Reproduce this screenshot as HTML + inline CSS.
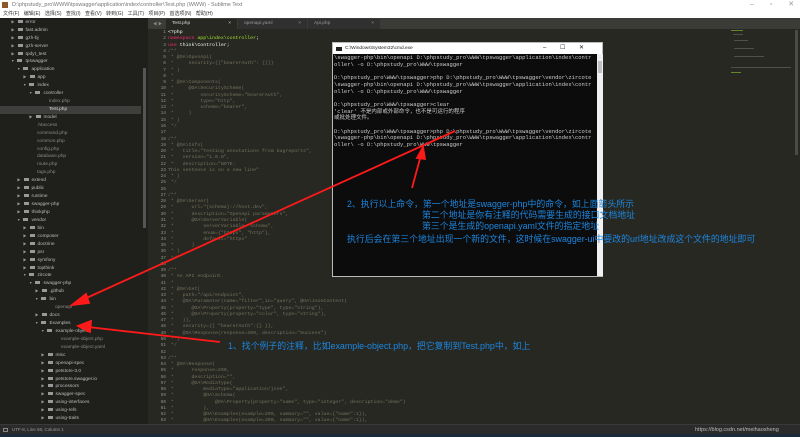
<!DOCTYPE html>
<html><head><meta charset="utf-8"><style>
*{margin:0;padding:0;box-sizing:border-box}
body{width:800px;height:437px;overflow:hidden;background:#272822;position:relative;font-family:"Liberation Sans","Noto Sans CJK SC",sans-serif}
.abs{position:absolute}
#title{left:0;top:0;width:800px;height:10px;background:#fff;font-size:5.5px;color:#777;line-height:10px;padding-left:12px}
#menu{left:0;top:10px;width:800px;height:8px;background:#fff;font-size:5px;color:#333;line-height:8px;padding-left:3px;word-spacing:3px}
#side{left:0;top:18px;width:148px;height:406px;background:#1f201c;font-size:4.8px;color:#bbb}
.row{position:absolute;height:7.9px;line-height:7.9px;white-space:nowrap}
.row i{display:inline-block;width:5px;height:3.5px;background:#999;margin-right:3px;vertical-align:middle}
.row b{font-weight:normal;color:#999;margin-right:3px;font-size:3.5px}
#tabs{left:148px;top:18px;width:652px;height:11px;background:#3b3b38}
.tab{position:absolute;top:1px;height:10px;font-size:4.8px;color:#999;line-height:10px;padding-left:6px;background:#303030}
#code{left:148px;top:30px;font-family:"Liberation Mono",monospace;font-size:4.9px;line-height:6.27px;color:#75715e;white-space:pre}
#ln{left:148px;top:30px;width:18px;text-align:right;font-family:"Liberation Mono",monospace;font-size:4.5px;line-height:6.27px;color:#8f908a;white-space:pre}
.k{color:#f92672}.g{color:#a6e22e}.w{color:#f8f8f2}
#cmd{left:332px;top:42px;width:271px;height:235px;background:#0c0c0c;border:1px solid #bbb}
#cmdt{left:0;top:0;width:269px;height:11px;background:#fff;font-size:4.8px;line-height:11px;color:#222;padding-left:12px}
#cmdtx{left:1px;top:12px;font-family:"Liberation Mono","Noto Sans CJK SC",monospace;font-size:5.5px;line-height:6.7px;color:#ccc;white-space:pre}
.ann{color:#1c86e0;font-size:8.9px;white-space:nowrap;position:absolute;line-height:12px}
#status{left:0;top:424px;width:800px;height:10px;background:#2b2b2b;border-top:1px solid #3a3a3a;font-size:4.5px;color:#999;line-height:10px;padding-left:12px}
#bot{left:0;top:434px;width:800px;height:3px;background:#1b2a3a}
</style></head><body>
<div id="title" class="abs">D:\phpstudy_pro\WWW\tpswagger\application\index\controller\Test.php (WWW) - Sublime Text</div>
<div class="abs" style="left:2px;top:2px;width:6px;height:6px;background:#8a5a2a"></div>
<div class="abs" style="left:750px;top:0;font-size:7px;color:#999;line-height:10px;word-spacing:14px">–  ▫  ✕</div>
<div id="menu" class="abs">文件(F) 编辑(E) 选择(S) 查找(I) 查看(V) 转到(G) 工具(T) 项目(P) 首选项(N) 帮助(H)</div>
<div id="side" class="abs">
<div class="row" style="left:11px;top:1px"><b>▶</b><i></i>error</div>
<div class="row" style="left:11px;top:9px"><b>▶</b><i></i>fast.admin</div>
<div class="row" style="left:11px;top:17px"><b>▶</b><i></i>gzh-bj</div>
<div class="row" style="left:11px;top:25px"><b>▶</b><i></i>gzh-server</div>
<div class="row" style="left:11px;top:33px"><b>▶</b><i></i>tpdyt_test</div>
<div class="row" style="left:11px;top:40px"><b>▼</b><i></i>tpswagger</div>
<div class="row" style="left:17px;top:48px"><b>▼</b><i></i>application</div>
<div class="row" style="left:23px;top:56px"><b>▶</b><i></i>app</div>
<div class="row" style="left:23px;top:64px"><b>▼</b><i></i>index</div>
<div class="row" style="left:29px;top:72px"><b>▼</b><i></i>controller</div>
<div class="row" style="left:49px;top:80px;color:#888">index.php</div>
<div class="abs" style="left:0;top:88px;width:141px;height:8px;background:#3e3e3c"></div>
<div class="row" style="left:49px;top:88px;color:#ddd">Test.php</div>
<div class="row" style="left:29px;top:96px"><b>▶</b><i></i>model</div>
<div class="row" style="left:37px;top:104px;color:#888">.htaccess</div>
<div class="row" style="left:37px;top:112px;color:#888">command.php</div>
<div class="row" style="left:37px;top:120px;color:#888">common.php</div>
<div class="row" style="left:37px;top:128px;color:#888">config.php</div>
<div class="row" style="left:37px;top:135px;color:#888">database.php</div>
<div class="row" style="left:37px;top:143px;color:#888">route.php</div>
<div class="row" style="left:37px;top:151px;color:#888">tags.php</div>
<div class="row" style="left:17px;top:159px"><b>▶</b><i></i>extend</div>
<div class="row" style="left:17px;top:167px"><b>▶</b><i></i>public</div>
<div class="row" style="left:17px;top:175px"><b>▶</b><i></i>runtime</div>
<div class="row" style="left:17px;top:183px"><b>▶</b><i></i>swagger-php</div>
<div class="row" style="left:17px;top:191px"><b>▶</b><i></i>thinkphp</div>
<div class="row" style="left:17px;top:199px"><b>▼</b><i></i>vendor</div>
<div class="row" style="left:23px;top:207px"><b>▶</b><i></i>bin</div>
<div class="row" style="left:23px;top:215px"><b>▶</b><i></i>composer</div>
<div class="row" style="left:23px;top:223px"><b>▶</b><i></i>doctrine</div>
<div class="row" style="left:23px;top:231px"><b>▶</b><i></i>psr</div>
<div class="row" style="left:23px;top:239px"><b>▶</b><i></i>symfony</div>
<div class="row" style="left:23px;top:247px"><b>▶</b><i></i>topthink</div>
<div class="row" style="left:23px;top:254px"><b>▼</b><i></i>zircote</div>
<div class="row" style="left:29px;top:262px"><b>▼</b><i></i>swagger-php</div>
<div class="row" style="left:35px;top:270px"><b>▶</b><i></i>.github</div>
<div class="row" style="left:35px;top:278px"><b>▼</b><i></i>bin</div>
<div class="row" style="left:55px;top:286px;color:#888">openapi</div>
<div class="row" style="left:35px;top:294px"><b>▶</b><i></i>docs</div>
<div class="row" style="left:35px;top:302px"><b>▼</b><i></i>Examples</div>
<div class="row" style="left:41px;top:310px"><b>▼</b><i></i>example-object</div>
<div class="row" style="left:61px;top:318px;color:#888">example-object.php</div>
<div class="row" style="left:61px;top:326px;color:#888">example-object.yaml</div>
<div class="row" style="left:41px;top:334px"><b>▶</b><i></i>misc</div>
<div class="row" style="left:41px;top:342px"><b>▶</b><i></i>openapi-spec</div>
<div class="row" style="left:41px;top:350px"><b>▶</b><i></i>petstore-3.0</div>
<div class="row" style="left:41px;top:358px"><b>▶</b><i></i>petstore.swagger.io</div>
<div class="row" style="left:41px;top:365px"><b>▶</b><i></i>processors</div>
<div class="row" style="left:41px;top:373px"><b>▶</b><i></i>swagger-spec</div>
<div class="row" style="left:41px;top:381px"><b>▶</b><i></i>using-interfaces</div>
<div class="row" style="left:41px;top:389px"><b>▶</b><i></i>using-refs</div>
<div class="row" style="left:41px;top:397px"><b>▶</b><i></i>using-traits</div>
<div class="abs" style="left:143px;top:50px;width:3px;height:160px;background:#555"></div>
</div>
<div id="tabs" class="abs">
<div class="abs" style="left:5px;top:0;font-size:4px;color:#888;line-height:11px">◀ ▶</div>
<div class="tab" style="left:18px;width:71px;background:#272822;color:#ddd">Test.php<span style="position:absolute;right:6px">×</span></div>
<div class="tab" style="left:90px;width:69px">openapi.yaml<span style="position:absolute;right:6px">×</span></div>
<div class="tab" style="left:160px;width:72px">Api.php<span style="position:absolute;right:6px">×</span></div>
</div>
<div id="ln" class="abs">1
2
3
4
5
6
7
8
9
10
11
12
13
14
15
16
17
18
19
20
21
22
23
24
25
26
27
28
29
30
31
32
33
34
35
36
37
38
39
40
41
42
43
44
45
46
47
48
49
50
51
52
53
54
55
56
57
58
59
60
61
62
63</div>
<div id="code" class="abs" style="left:168px"><span class="w">&lt;?php</span>
<span class="k">namespace</span> <span class="g">app\index\controller</span><span class="w">;</span>
<span class="k">use</span> <span class="w">think\Controller;</span>
/**
 * @OA\OpenApi(
 *     security={{"bearerAuth": {}}}
 * )
 *
 * @OA\Components(
 *     @OA\SecurityScheme(
 *         securityScheme="bearerAuth",
 *         type="http",
 *         scheme="bearer",
 *     )
 * )
 */

/**
 * @OA\Info(
 *   title="Testing annotations from bugreports",
 *   version="1.0.0",
 *   description="NOTE:
This sentence is on a new line"
 * )
 */

/**
 * @OA\Server(
 *      url="{schema}://host.dev",
 *      description="OpenApi parameters",
 *      @OA\ServerVariable(
 *          serverVariable="schema",
 *          enum={"https", "http"},
 *          default="https"
 *      )
 * )
 */

/**
 * An API endpoint.
 *
 * @OA\Get(
 *   path="/api/endpoint",
 *   @OA\Parameter(name="filter",in="query", @OA\JsonContent(
 *      @OA\Property(property="type", type="string"),
 *      @OA\Property(property="color", type="string"),
 *   )),
 *   security={{ "bearerAuth":{} }},
 *   @OA\Response(response=200, description="Success")
 * )
 */

/**
 * @OA\Response(
 *      response=200,
 *      description="",
 *      @OA\MediaType(
 *          mediaType="application/json",
 *          @OA\Schema(
 *              @OA\Property(property="name", type="integer", description="demo")
 *          ),
 *          @OA\Examples(example=200, summary="", value={"name":1}),
 *          @OA\Examples(example=300, summary="", value={"name":1}),</div>
<div class="abs" style="left:731px;top:30px;width:60px;height:50px;opacity:.5">
<div class="abs" style="left:0;top:0;width:12px;height:1px;background:#a6e22e"></div>
<div class="abs" style="left:2px;top:4px;width:10px;height:1px;background:#777"></div>
<div class="abs" style="left:3px;top:10px;width:14px;height:1px;background:#777"></div>
<div class="abs" style="left:3px;top:18px;width:20px;height:1px;background:#777"></div>
<div class="abs" style="left:3px;top:26px;width:30px;height:1px;background:#777"></div>
<div class="abs" style="left:0;top:37px;width:60px;height:1px;background:#777"></div>
<div class="abs" style="left:0;top:42px;width:10px;height:1px;background:#a6e22e"></div>
</div>
<div class="abs" style="left:795px;top:30px;width:3px;height:125px;background:#4a4a48"></div>
<div id="cmd" class="abs">
<div id="cmdt" class="abs">C:\Windows\System32\cmd.exe<span style="position:absolute;left:3px;top:4px;width:6px;height:4px;background:#222"></span><span style="position:absolute;left:210px;font-size:6px;word-spacing:12px">–  ☐  ✕</span></div>
<div id="cmdtx" class="abs">\swagger-php\bin\openapi D:\phpstudy_pro\WWW\tpswagger\application\index\contr
oller\ -o D:\phpstudy_pro\WWW\tpswagger

D:\phpstudy_pro\WWW\tpswagger&gt;php D:\phpstudy_pro\WWW\tpswagger\vendor\zircote
\swagger-php\bin\openapi D:\phpstudy_pro\WWW\tpswagger\application\index\contr
oller\ -o D:\phpstudy_pro\WWW\tpswagger

D:\phpstudy_pro\WWW\tpswagger&gt;clear
'clear' 不是内部或外部命令，也不是可运行的程序
或批处理文件。

D:\phpstudy_pro\WWW\tpswagger&gt;php D:\phpstudy_pro\WWW\tpswagger\vendor\zircote
\swagger-php\bin\openapi D:\phpstudy_pro\WWW\tpswagger\application\index\contr
oller\ -o D:\phpstudy_pro\WWW\tpswagger</div>
<div class="abs" style="left:264px;top:11px;width:6px;height:222px;background:#f0f0f0"></div>
<div class="abs" style="left:265px;top:18px;width:4px;height:12px;background:#c0c0c0"></div>
</div>
<div class="ann" style="left:347px;top:198px">2、执行以上命令，第一个地址是swagger-php中的命令，如上面箭头所示</div>
<div class="ann" style="left:422px;top:209px">第二个地址是你有注释的代码需要生成的接口文档地址</div>
<div class="ann" style="left:422px;top:220px">第三个是生成的openapi.yaml文件的指定地址</div>
<div class="ann" style="left:347px;top:233px">执行后会在第三个地址出现一个新的文件，这时候在swagger-ui中要改的url地址改成这个文件的地址即可</div>
<div class="ann" style="left:228px;top:340px">1、找个例子的注释，比如example-object.php，把它复制到Test.php中，如上</div>
<svg class="abs" style="left:0;top:0" width="800" height="437">
<g stroke="#ff1a1a" stroke-width="1.8" fill="#ff1a1a">
<line x1="455" y1="131" x2="82" y2="300"/>
<polygon points="72,305 86,294 89,303"/>
<line x1="412" y1="188" x2="421" y2="155"/>
<polygon points="423,147 417,158 425,159"/>
<line x1="220" y1="342" x2="88" y2="327"/>
<polygon points="78,326 91,321 90,332"/>
</g>
</svg>
<div id="status" class="abs">UTF-8, Line 68, Column 1<span style="position:absolute;left:3px;top:3px;width:5px;height:4px;border:1px solid #888"></span><span style="position:absolute;left:695px;color:#bbb;font-size:5.5px">https://blog.csdn.net/meihaosheng</span></div>
<div id="bot" class="abs"></div>
</body></html>
